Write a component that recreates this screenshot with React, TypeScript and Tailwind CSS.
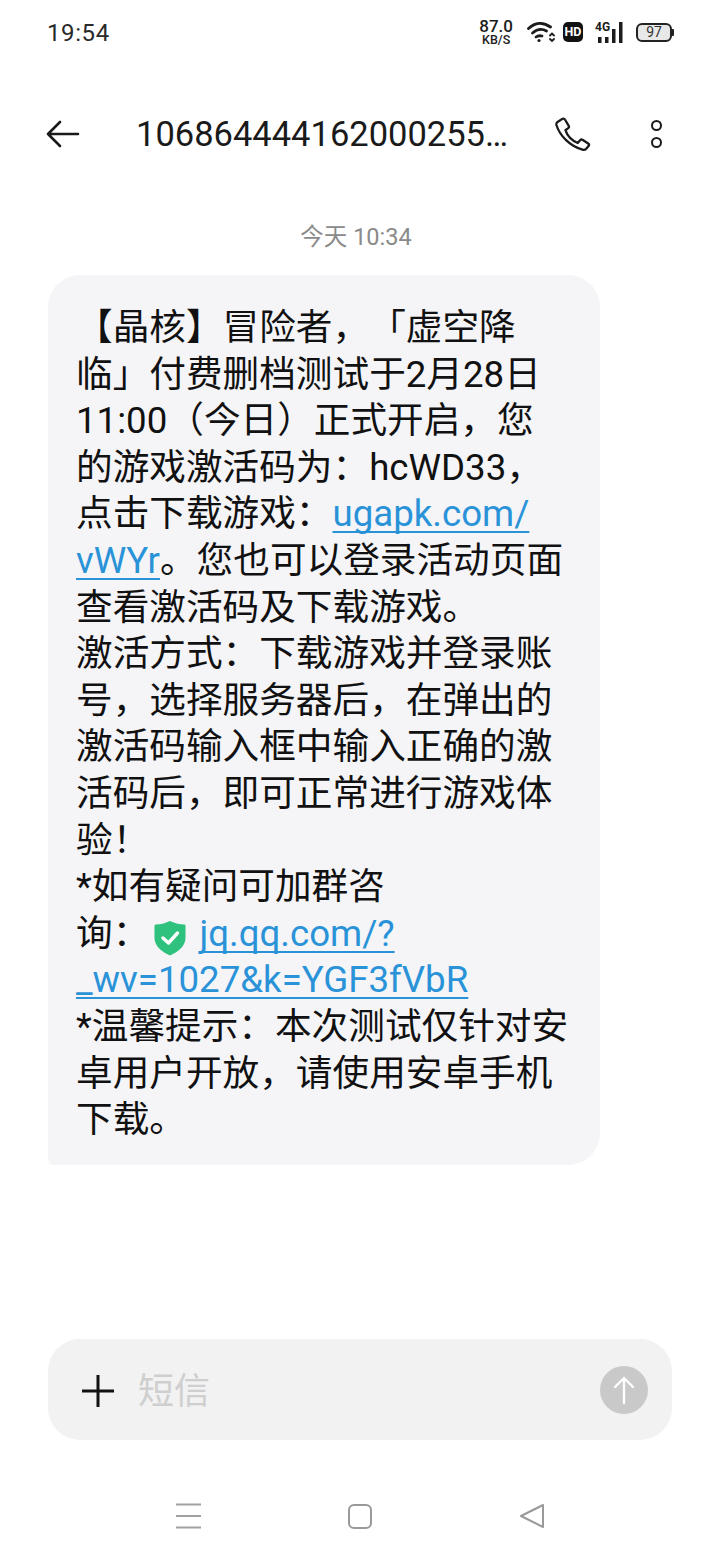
import React from 'react';

const FONT = 'font-[Roboto,"Noto_Sans_CJK_SC",sans-serif]';

const Link = ({ children }: { children: React.ReactNode }) => (
  <span className="text-[#2a93d8] underline decoration-[2px] underline-offset-[5px] [text-decoration-skip-ink:none]">{children}</span>
);

const ShieldIcon = () => (
  <svg width="32" height="36" viewBox="0 0 32 36" className="mb-[-3px] ml-[5px] mr-[4px] inline-block">
    <path d="M16 1 C21 3.5 26 4.5 30 4.5 C31 4.5 31.5 5 31.5 6 V18 C31.5 26 24 32 16 35.5 C8 32 .5 26 .5 18 V6 C.5 5 1 4.5 2 4.5 C6 4.5 11 3.5 16 1 Z" fill="#2ec27e" />
    <path d="M9 18 L14.5 23 L23.5 13" fill="none" stroke="#fff" strokeWidth="3.4" strokeLinecap="round" strokeLinejoin="round" />
  </svg>
);

const StatusBar = () => (
  <div className="flex h-[64px] items-center justify-between pl-[47px] pr-[46px]">
    <span className="pt-[2px] text-[24px] tracking-[0.6px] text-[#2a2a2a]">19:54</span>
    <div className="flex items-center">
      <div className="flex flex-col items-center text-[#1c1c1c]">
        <span className="text-[17px] font-medium leading-[15px]">87.0</span>
        <span className="text-[12.5px] font-medium leading-[11px]">KB/S</span>
      </div>
      <svg width="28" height="22" viewBox="0 0 28 22" className="ml-[14px]" fill="none" stroke="#1c1c1c" strokeWidth="2.8" strokeLinecap="round">
        <path d="M1.5 7.5 C8 1.5 16 .5 23.5 6" />
        <path d="M5.5 12 C10 8 15 7.5 19.5 10" />
        <path d="M9 16 C11 14.5 13 14.5 15 15" />
        <circle cx="12" cy="19.5" r="1.6" fill="#1c1c1c" stroke="none" />
        <path d="M23 14.5 L25 12.5 L27 14.5 M23 18 L25 20 L27 18" strokeWidth="1.8" />
      </svg>
      <div className="ml-[8px] flex h-[20px] w-[20px] items-center justify-center rounded-[5px] bg-[#111] text-[12.5px] font-bold leading-none text-white">HD</div>
      <svg width="30" height="24" viewBox="0 0 30 24" className="ml-[12px]" fill="#1c1c1c">
        <text x="0" y="11" fontSize="12" fontWeight="700" fontFamily="Roboto">4G</text>
        <rect x="3" y="17" width="3.5" height="6" />
        <rect x="10" y="17" width="3.5" height="6" />
        <rect x="17" y="9" width="3.5" height="14" />
        <rect x="24" y="2" width="3.5" height="21" />
      </svg>
      <div className="ml-[11px] flex items-center">
        <div className="flex h-[19px] w-[36px] items-center justify-center rounded-[6px] border-[2px] border-[#222] bg-[#e8e8e8] text-[14px] leading-none text-[#333]">97</div>
        <div className="h-[7px] w-[2px] rounded-r-[1px] bg-[#222]" />
      </div>
    </div>
  </div>
);

const Header = () => (
  <div className="mt-[28px] flex h-[84px] items-center pl-[46px]">
    <svg width="34" height="28" viewBox="0 0 34 28" fill="none" stroke="#1a1a1a" strokeWidth="2.6" strokeLinecap="round" strokeLinejoin="round">
      <path d="M32 14 H2 M14 2 L2 14 L14 26" />
    </svg>
    <span className="ml-[56px] w-[419px] whitespace-nowrap text-[34.5px] leading-none text-[#1a1a1a]">106864444162000255…</span>
    <svg width="36" height="36" viewBox="0 0 38 36" fill="none" stroke="#1a1a1a" strokeWidth="2.4" strokeLinejoin="round">
      <path d="M3 5 L8 2 C9 1.5 10 1.8 10.5 2.7 L14.5 9.5 C15 10.4 14.8 11.2 14 11.8 L11 14 C13 20 18 25 24 27.5 L26.5 24.5 C27.2 23.7 28 23.6 29 24 L35 28 C36 28.7 36.2 29.6 35.6 30.5 L33 33.5 C32 34.5 30.5 35 29 34.5 C16 31 5 20 1.5 8.5 C1.2 7 1.8 5.8 3 5 Z" />
    </svg>
    <div className="ml-[60px] flex flex-col gap-[6px]">
      <span className="h-[11px] w-[11px] rounded-full border-[2.5px] border-[#1a1a1a]" />
      <span className="h-[11px] w-[11px] rounded-full border-[2.5px] border-[#1a1a1a]" />
    </div>
  </div>
);

const Bubble = () => (
  <div className="ml-[48px] h-[890px] w-[552px] rounded-[32px] rounded-bl-[6px] bg-[#f5f5f8] pl-[28px] pt-[30px] text-[36.65px] leading-[46.6px] text-[#111] [text-spacing-trim:space-all]">
    <div className="whitespace-nowrap">【晶核】冒险者，「虚空降</div>
    <div className="whitespace-nowrap">临」付费删档测试于2月28日</div>
    <div className="whitespace-nowrap">11:00（今日）正式开启，您</div>
    <div className="whitespace-nowrap">的游戏激活码为：hcWD33，</div>
    <div className="whitespace-nowrap">点击下载游戏：<Link>ugapk.com/</Link></div>
    <div className="whitespace-nowrap"><Link>vWYr</Link>。您也可以登录活动页面</div>
    <div className="whitespace-nowrap">查看激活码及下载游戏。</div>
    <div className="whitespace-nowrap">激活方式：下载游戏并登录账</div>
    <div className="whitespace-nowrap">号，选择服务器后，在弹出的</div>
    <div className="whitespace-nowrap">激活码输入框中输入正确的激</div>
    <div className="whitespace-nowrap">活码后，即可正常进行游戏体</div>
    <div className="whitespace-nowrap">验！</div>
    <div className="whitespace-nowrap">*如有疑问可加群咨</div>
    <div className="whitespace-nowrap">询：<ShieldIcon /> <Link>jq.qq.com/?</Link></div>
    <div className="whitespace-nowrap"><Link>_wv=1027&amp;k=YGF3fVbR</Link></div>
    <div className="whitespace-nowrap">*温馨提示：本次测试仅针对安</div>
    <div className="whitespace-nowrap">卓用户开放，请使用安卓手机</div>
    <div className="whitespace-nowrap">下载。</div>
  </div>
);

const InputBar = () => (
  <div className="mx-[48px] mt-[174px] flex h-[101px] items-center rounded-[32px] bg-[#f2f2f2] pl-[34px] pr-[24px]">
    <svg width="32" height="32" viewBox="0 0 32 32" stroke="#111" strokeWidth="3" className="mt-[3px]">
      <path d="M16 0 V32 M0 16 H32" />
    </svg>
    <span className="ml-[24px] flex-1 pt-[5px] text-[36px] leading-none text-[#cfcfcf]">短信</span>
    <div className="flex h-[48px] w-[48px] items-center justify-center rounded-full bg-[#c9c9c9]">
      <svg width="22" height="30" viewBox="0 0 22 30" fill="none" stroke="#fff" strokeWidth="2.4" strokeLinecap="round" strokeLinejoin="round">
        <path d="M11 28 V3 M2 12 L11 3 L20 12" />
      </svg>
    </div>
  </div>
);

const NavBar = () => (
  <div className="mt-[63px] flex items-center pl-[175px]">
    <svg width="27" height="26" viewBox="0 0 27 26" stroke="#a0a0a0" strokeWidth="2">
      <path d="M1 1.5 H26 M1 13 H26 M1 24.5 H26" />
    </svg>
    <div className="ml-[146px] h-[25px] w-[24px] rounded-[6px] border-[2px] border-[#999]" />
    <svg width="26" height="26" viewBox="0 0 26 26" fill="none" stroke="#999" strokeWidth="2" strokeLinejoin="round" className="ml-[147px]">
      <path d="M24 2 V24 L2 13 Z" />
    </svg>
  </div>
);

export default function App() {
  return (
    <div className={`${FONT} h-[1560px] w-[720px] overflow-hidden bg-white`}>
      <StatusBar />
      <Header />
      <div className="mt-[44px] flex h-[35px] items-center justify-center pr-[8px] text-[23.5px] leading-none text-[#8a8a8a]">今天 10:34</div>
      <div className="mt-[20px]">
        <Bubble />
      </div>
      <InputBar />
      <NavBar />
    </div>
  );
}
